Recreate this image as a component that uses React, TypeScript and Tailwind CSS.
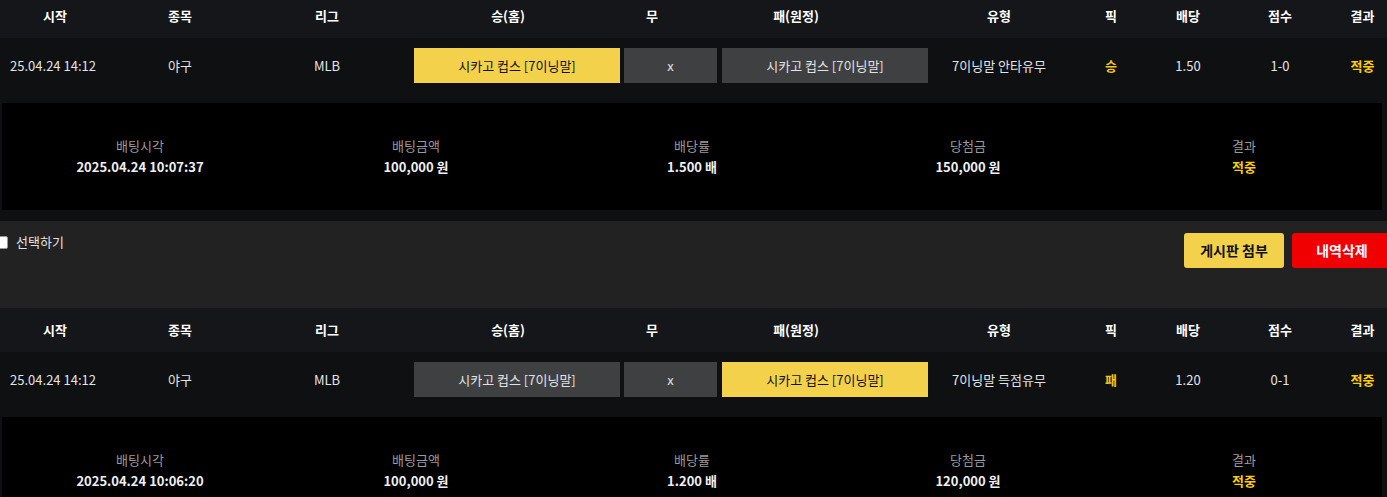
import React from "react";

type Bet = {
  start: string;
  sport: string;
  league: string;
  home: string;
  away: string;
  pick: "home" | "away";
  type: string;
  pickLabel: string;
  odds: string;
  score: string;
  result: string;
  betTime: string;
  amount: string;
  rate: string;
  win: string;
};

const bets: Bet[] = [
  {
    start: "25.04.24 14:12",
    sport: "야구",
    league: "MLB",
    home: "시카고 컵스 [7이닝말]",
    away: "시카고 컵스 [7이닝말]",
    pick: "home",
    type: "7이닝말 안타유무",
    pickLabel: "승",
    odds: "1.50",
    score: "1-0",
    result: "적중",
    betTime: "2025.04.24 10:07:37",
    amount: "100,000 원",
    rate: "1.500 배",
    win: "150,000 원",
  },
  {
    start: "25.04.24 14:12",
    sport: "야구",
    league: "MLB",
    home: "시카고 컵스 [7이닝말]",
    away: "시카고 컵스 [7이닝말]",
    pick: "away",
    type: "7이닝말 득점유무",
    pickLabel: "패",
    odds: "1.20",
    score: "0-1",
    result: "적중",
    betTime: "2025.04.24 10:06:20",
    amount: "100,000 원",
    rate: "1.200 배",
    win: "120,000 원",
  },
];

const cols = "grid grid-cols-[110px_140px_154px_218px_97px_211px_138px_86px_68px_116px_1fr]";

function BetBlock({ bet }: { bet: Bet }) {
  const on = "bg-[#f4d14a] text-[#111]";
  const off = "bg-[#3f4042] text-[#e2e2e2]";
  return (
    <div className="bg-[#0f1012] pb-[11px]">
      <div className={`${cols} h-[44px] items-center bg-[#151619] text-[13px] font-bold text-white leading-[18px]`}>
        <div className="text-center">시작</div>
        <div className="text-center">종목</div>
        <div className="text-center">리그</div>
        <div className="text-center pr-[10px]">승(홈)</div>
        <div className="text-center pr-[37px]">무</div>
        <div className="text-center pr-[57px]">패(원정)</div>
        <div className="text-center">유형</div>
        <div className="text-center">픽</div>
        <div className="text-center">배당</div>
        <div className="text-center">점수</div>
        <div className="text-center">결과</div>
      </div>
      <div className={`${cols} items-center pt-[10px] pb-[10px] text-[13px] text-[#e4e4e4] leading-[18px]`}>
        <div className="text-center pr-[4px]">{bet.start}</div>
        <div className="text-center">{bet.sport}</div>
        <div className="text-center">{bet.league}</div>
        <div className="pl-[10px] pr-[2px]">
          <div className={`h-[35px] flex items-center justify-center ${bet.pick === "home" ? on : off}`}>{bet.home}</div>
        </div>
        <div className="px-[2px]">
          <div className={`h-[35px] flex items-center justify-center ${off}`}>x</div>
        </div>
        <div className="pl-[3px] pr-[2px]">
          <div className={`h-[35px] flex items-center justify-center ${bet.pick === "away" ? on : off}`}>{bet.away}</div>
        </div>
        <div className="text-center">{bet.type}</div>
        <div className="text-center font-bold text-[#f5c518]">{bet.pickLabel}</div>
        <div className="text-center">{bet.odds}</div>
        <div className="text-center">{bet.score}</div>
        <div className="text-center font-bold text-[#ffcc00]">{bet.result}</div>
      </div>
      <div className="mt-[10px] ml-[2px] w-[1380px] h-[107px] bg-black grid grid-cols-5 content-start pt-[32px] text-[13px] leading-[21px]">
        {[
          ["배팅시각", bet.betTime, "text-[#f0f0f0]"],
          ["배팅금액", bet.amount, "text-[#f0f0f0]"],
          ["배당률", bet.rate, "text-[#f0f0f0]"],
          ["당첨금", bet.win, "text-[#f0f0f0]"],
          ["결과", bet.result, "text-[#ffcc00]"],
        ].map(([label, value, color]) => (
          <div key={label} className="flex flex-col items-center">
            <span className="text-[#9a9a9a]">{label}</span>
            <span className={`font-bold ${color}`}>{value}</span>
          </div>
        ))}
      </div>
    </div>
  );
}

export default function App() {
  return (
    <div
      className="w-[1387px] h-[497px] overflow-hidden bg-[#0f1012]"
      style={{ fontFamily: '"Noto Sans CJK KR", "Noto Sans", sans-serif' }}
    >
      <div className="-mt-[6px]">
        <BetBlock bet={bets[0]} />
        <div className="h-[87px] bg-[#222222] flex justify-between items-start pt-[12px]">
          <label className="flex items-center gap-[8px] h-[18px] -ml-[5px] text-[13px] text-[#e2e2e2]">
            <input type="checkbox" className="w-[13px] h-[13px] m-0 appearance-none bg-white border border-[#999] rounded-[2px]" />
            선택하기
          </label>
          <div className="flex gap-[8px] -mr-[5px]">
            <button className="w-[100px] h-[35px] rounded-[3px] bg-[#f4d14a] text-[#111] text-[14px] font-bold">게시판 첨부</button>
            <button className="w-[100px] h-[35px] rounded-[3px] bg-[#f00000] text-white text-[14px] font-bold">내역삭제</button>
          </div>
        </div>
        <BetBlock bet={bets[1]} />
      </div>
    </div>
  );
}
